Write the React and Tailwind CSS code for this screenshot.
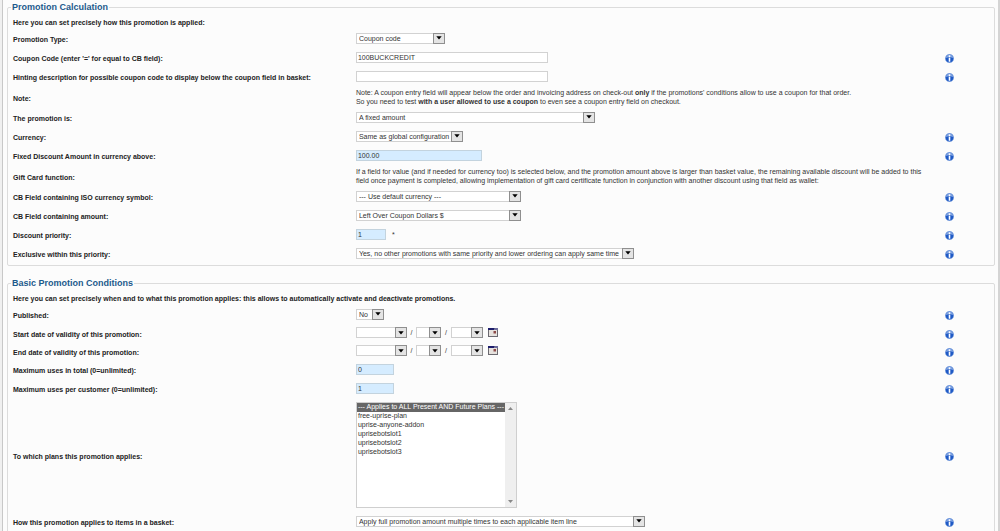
import { useState } from "react";

const PLANS = [
  "--- Applies to ALL Present AND Future Plans ---",
  "free-uprise-plan",
  "uprise-anyone-addon",
  "uprisebotslot1",
  "uprisebotslot2",
  "uprisebotslot3",
];

function InfoButton() {
  return (
    <button type="button" aria-label="Help" className="block h-[9px] w-[9px]">
      <svg viewBox="0 0 18 18" className="block h-full w-full">
        <circle cx="9" cy="9" r="8.5" fill="#1f5ac6" stroke="#9db8e6" strokeWidth="1" />
        <path d="M2 8a7 6.500 0 0 1 14 0a14 9 0 0 0-14 0z" fill="#7fa3e2" />
        <circle cx="9" cy="4.5" r="1.8" fill="#fff" />
        <rect x="7.400" y="7.500" width="3.200" height="8" fill="#fff" />
      </svg>
    </button>
  );
}

function CalendarButton({ label }) {
  return (
    <button type="button" aria-label={label} className="ml-[5px] block h-[9px] w-[10px]">
      <svg viewBox="0 0 20 18" className="block h-full w-full">
        <rect x="1" y="1" width="18" height="16" fill="#e6e2de" stroke="#6b6970" strokeWidth="2" />
        <rect x="0" y="0" width="13" height="4" fill="#1d1d6b" />
        <rect x="13" y="0" width="7" height="4" fill="#6c6c9c" />
        <rect x="11" y="6" width="5" height="5" fill="#8c4a48" />
      </svg>
    </button>
  );
}

function Select({ id, label, options, width }) {
  return (
    <div className={`relative h-[11px] ${width}`}>
      <select
        id={id}
        aria-label={label}
        className="block h-full w-full appearance-none border border-[#d2d2d2] bg-white pr-[12px] pl-[2px] text-[7px] leading-[9px] text-[#333] outline-none"
      >
        {options.map((o) => (
          <option key={o}>{o}</option>
        ))}
      </select>
      <span className="pointer-events-none absolute inset-y-0 right-0 flex w-[12px] items-center justify-center border border-[#8f8f8f] bg-[#e4e4e4]">
        <svg viewBox="0 0 6 4" className="block h-[4px] w-[6px]">
          <path d="M0.300 0.300h5.400L3 3.600z" fill="#000" />
        </svg>
      </span>
    </div>
  );
}

function TextInput({ id, value, width, required }) {
  const [text, setText] = useState(value);
  return (
    <input
      id={id}
      type="text"
      value={text}
      onChange={(e) => setText(e.target.value)}
      className={`block h-[11px] border px-px text-[7px] leading-[9px] text-[#333] outline-none ${width} ${
        required ? "border-[#c3d3de] bg-[#d5ecff]" : "border-[#d2d2d2] bg-white"
      }`}
    />
  );
}

function Row({ label, htmlFor, info, height = "h-[19px]", children }) {
  const Label = htmlFor ? "label" : "span";
  return (
    <div className={`grid grid-cols-[calc(35%+1px)_1fr_45px] items-center ${height}`}>
      <Label htmlFor={htmlFor} className="font-bold whitespace-nowrap text-[#222]">
        {label}
      </Label>
      <div className="flex items-center pb-[3px]">{children}</div>
      {info ? <InfoButton /> : <span />}
    </div>
  );
}

function DateFields({ id, name }) {
  return (
    <>
      <Select id={id} options={[""]} width="w-[51px]" />
      <span className="w-[9px] text-center">/</span>
      <Select label={`${name} day`} options={[""]} width="w-[25px]" />
      <span className="w-[10px] text-center">/</span>
      <Select label={`${name} year`} options={[""]} width="w-[32px]" />
      <CalendarButton label={`${name} calendar`} />
    </>
  );
}

function Section({ title, intro, children }) {
  return (
    <fieldset className="rounded-[2px] border border-[#dcdcdc] pr-[4px] pb-[1px] pl-[5px]">
      <legend className="-ml-[2px] px-px text-[9px] leading-[12px] font-bold text-[#1c5a8c]">
        {title}
      </legend>
      <p className="mt-[3px] h-[14px] leading-[14px] font-bold text-[#222]">{intro}</p>
      {children}
    </fieldset>
  );
}

export default function App() {
  return (
    <div className="h-screen overflow-hidden border-l-2 border-[#f0f0f0] bg-[#fcfcfc] font-['Liberation_Sans',Arial,sans-serif] text-[7px] leading-[9px] text-[#333]">
      <form className="flex min-h-full flex-col gap-[11px] border-r-2 border-l border-r-[#d4d4d4] border-l-[#c8c8c8] pt-px pr-[3px] pl-[4px]">
        <Section title="Promotion Calculation" intro="Here you can set precisely how this promotion is applied:">
          <Row label="Promotion Type:" htmlFor="type">
            <Select id="type" options={["Coupon code"]} width="w-[89px]" />
          </Row>
          <Row label="Coupon Code (enter '=' for equal to CB field):" htmlFor="code" info>
            <TextInput id="code" value="100BUCKCREDIT" width="w-[192px]" />
          </Row>
          <Row
            label="Hinting description for possible coupon code to display below the coupon field in basket:"
            htmlFor="hint"
            info
          >
            <TextInput id="hint" value="" width="w-[192px]" />
          </Row>
          <Row label="Note:" height="h-[22px]">
            <p>
              Note: A coupon entry field will appear below the order and invoicing address on check-out <b>only</b> if
              the promotions' conditions allow to use a coupon for that order.
              <br />
              So you need to test <b>with a user allowed to use a coupon</b> to even see a coupon entry field on
              checkout.
            </p>
          </Row>
          <Row label="The promotion is:" htmlFor="kind">
            <Select id="kind" options={["A fixed amount"]} width="w-[239px]" />
          </Row>
          <Row label="Currency:" htmlFor="currency" info>
            <Select id="currency" options={["Same as global configuration"]} width="w-[107px]" />
          </Row>
          <Row label="Fixed Discount Amount in currency above:" htmlFor="amount" info>
            <TextInput id="amount" value="100.00" width="w-[126px]" required />
          </Row>
          <Row label="Gift Card function:" height="h-[22px]">
            <p>
              If a field for value (and if needed for currency too) is selected below, and the promotion amount above is
              larger than basket value, the remaining available discount will be added to this
              <br />
              field once payment is completed, allowing implementation of gift card certificate function in conjunction
              with another discount using that field as wallet:
            </p>
          </Row>
          <Row label="CB Field containing ISO currency symbol:" htmlFor="iso" info>
            <Select id="iso" options={["--- Use default currency ---"]} width="w-[165px]" />
          </Row>
          <Row label="CB Field containing amount:" htmlFor="cbamount" info>
            <Select id="cbamount" options={["Left Over Coupon Dollars $"]} width="w-[165px]" />
          </Row>
          <Row label="Discount priority:" htmlFor="priority" info>
            <TextInput id="priority" value="1" width="w-[30px]" required />
            <span className="ml-[6px]">*</span>
          </Row>
          <Row label="Exclusive within this priority:" htmlFor="exclusive" info>
            <Select
              id="exclusive"
              options={["Yes, no other promotions with same priority and lower ordering can apply same time"]}
              width="w-[278px]"
            />
          </Row>
        </Section>

        <Section
          title="Basic Promotion Conditions"
          intro="Here you can set precisely when and to what this promotion applies: this allows to automatically activate and deactivate promotions."
        >
          <Row label="Published:" htmlFor="published" info>
            <Select id="published" options={["No", "Yes"]} width="w-[28px]" />
          </Row>
          <Row label="Start date of validity of this promotion:" htmlFor="start" info height="h-[18px]">
            <DateFields id="start" name="Start" />
          </Row>
          <Row label="End date of validity of this promotion:" htmlFor="end" info height="h-[18px]">
            <DateFields id="end" name="End" />
          </Row>
          <Row label="Maximum uses in total (0=unlimited):" htmlFor="total" info>
            <TextInput id="total" value="0" width="w-[38px]" required />
          </Row>
          <Row label="Maximum uses per customer (0=unlimited):" htmlFor="customer" info>
            <TextInput id="customer" value="1" width="w-[38px]" required />
          </Row>
          <Row label="To which plans this promotion applies:" htmlFor="plans" info height="h-[114px]">
            <div className="flex h-[106px] w-[161px] border border-[#cfcfcf] bg-white">
              <select
                id="plans"
                multiple
                defaultValue={[PLANS[0]]}
                className="block h-full flex-1 overflow-hidden text-[7px] leading-[9px] outline-none"
              >
                {PLANS.map((p) => (
                  <option
                    key={p}
                    className="block h-[9px] min-h-0 p-0 pl-px leading-[9px] whitespace-nowrap checked:bg-[linear-gradient(#666,#666)] checked:[-webkit-text-fill-color:#fff]"
                  >
                    {p}
                  </option>
                ))}
              </select>
              <div className="flex w-[11px] flex-col items-center justify-between bg-[#efefef] py-[4px]">
                <svg viewBox="0 0 5 3" className="h-[3px] w-[5px]">
                  <path d="M0 3h5L2.500 0z" fill="#888" />
                </svg>
                <svg viewBox="0 0 5 3" className="h-[3px] w-[5px]">
                  <path d="M0 0h5L2.500 3z" fill="#888" />
                </svg>
              </div>
            </div>
          </Row>
          <Row label="How this promotion applies to items in a basket:" htmlFor="apply" info>
            <Select
              id="apply"
              options={["Apply full promotion amount multiple times to each applicable item line"]}
              width="w-[289px]"
            />
          </Row>
        </Section>
      </form>
    </div>
  );
}
